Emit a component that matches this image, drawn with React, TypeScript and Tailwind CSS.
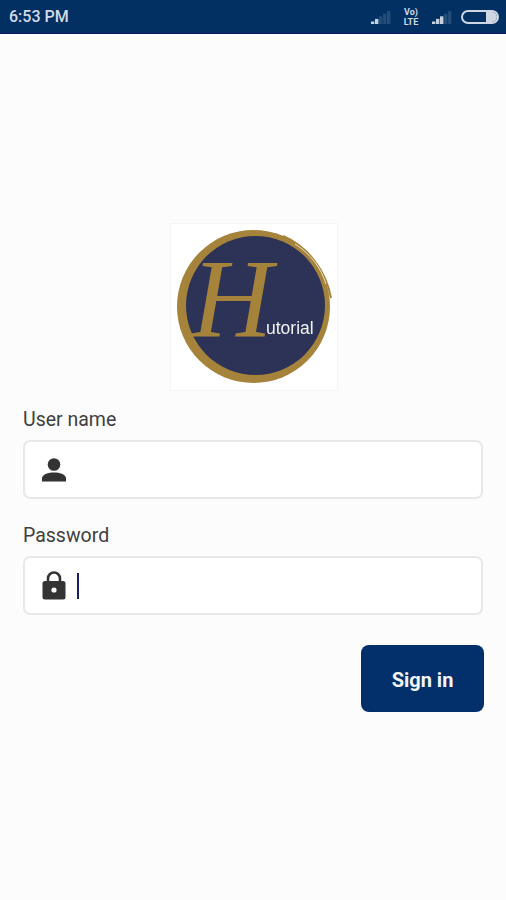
import React from 'react';

const Bars = ({ lit }: { lit: number }) => (
  <svg width="20" height="16" viewBox="0 0 20 16">
    {[0, 1, 2, 3, 4].map((i) => (
      <rect
        key={i}
        x={i * 4}
        y={12.5 - i * 2.6}
        width="3.4"
        height={2.5 + i * 2.6}
        fill="#dbe3ec"
        opacity={i < lit ? 0.9 : 0.16}
      />
    ))}
  </svg>
);

const StatusBar = () => (
  <div className="h-[34px] bg-[#023063] border-b border-[#12145c] flex items-center pl-[9px] pr-[7px] font-['Roboto',sans-serif]">
    <span className="text-[16px] font-medium text-[#d3dbe5] leading-none">6:53 PM</span>
    <div className="ml-auto flex items-center">
      <Bars lit={2} />
      <div className="ml-[11px] w-[18px] flex flex-col items-center text-[9px] font-bold leading-[10px] text-[#cfd8e3]">
        <span>Vo)</span>
        <span>LTE</span>
      </div>
      <div className="ml-[12px]">
        <Bars lit={3} />
      </div>
      <div className="ml-[9px] w-[38px] h-[14px] rounded-full border-2 border-[#cdd6e1] flex justify-end">
        <div className="w-[11px] h-full rounded-r-full bg-[#cdd6e1]" />
      </div>
    </div>
  </div>
);

const Logo = () => (
  <div className="w-[168px] h-[168px] bg-white border border-[#f5f5f5]">
    <svg width="166" height="166" viewBox="0 0 166 166" className="blur-[0.4px]">
      <circle cx="82.5" cy="82.5" r="76.5" fill="#a5833a" />
      <circle cx="84.5" cy="81.5" r="69.5" fill="#2c3357" />
      <path d="M112 12 C136 22 155 46 160 74" fill="none" stroke="#a5833a" strokeWidth="2" />
      <path d="M124 20 C140 30 150 44 155 60" fill="none" stroke="#e9e2d0" strokeWidth="1" />
      <text
        x="61"
        y="112"
        textAnchor="middle"
        fontSize="112"
        fontStyle="italic"
        fill="#a5833a"
        fontFamily="'Liberation Serif', serif"
      >
        H
      </text>
      <text x="95" y="110" fontSize="17.5" fill="#f2f2f2" fontFamily="'Liberation Sans', sans-serif">
        utorial
      </text>
    </svg>
  </div>
);

const Field = ({ label, icon, caret }: { label: string; icon: React.ReactNode; caret?: boolean }) => (
  <div>
    <div className="h-[24px] text-[19.5px] leading-[26px] text-[#404040]">{label}</div>
    <div className="mt-[9px] h-[59px] bg-white border-2 border-[#e8e8e8] rounded-[7px] flex items-center pl-[17px]">
      <div className="w-[24px] flex justify-center">{icon}</div>
      {caret && <div className="ml-[11px] w-[2px] h-[26px] bg-[#1b1d5e]" />}
    </div>
  </div>
);

const App: React.FC = () => {
  return (
    <div className="min-h-[900px] bg-[#fcfcfc] font-['Roboto',sans-serif]">
      <StatusBar />
      <div className="pt-[189px] px-[23px]">
        <div className="flex justify-center pl-[2px]">
          <Logo />
        </div>
        <div className="mt-[16px] flex flex-col gap-[24px]">
          <Field
            label="User name"
            icon={
              <svg width="24" height="24" viewBox="0 0 24 24" fill="#333333">
                <circle cx="12" cy="6.5" r="6.3" />
                <path d="M0 23.5 V20 C1 16 6 14.5 12 14.5 C18 14.5 23 16 24 20 V23.5 Z" />
              </svg>
            }
          />
          <Field
            label="Password"
            caret
            icon={
              <svg width="24" height="29" viewBox="0 0 24 29">
                <path
                  d="M6 11 V7.5 A6 6 0 0 1 18 7.5 V11"
                  fill="none"
                  stroke="#333333"
                  strokeWidth="2.6"
                />
                <rect x="0.5" y="10" width="23" height="18.5" rx="2.5" fill="#333333" />
                <circle cx="12" cy="19" r="2.6" fill="#fcfcfc" />
              </svg>
            }
          />
        </div>
        <div className="mt-[30px] flex justify-end -mr-[1px]">
          <button className="w-[123px] h-[67px] pt-[2px] rounded-[8px] bg-[#03306a] text-[#f2f4f8] text-[20px] font-bold">
            Sign in
          </button>
        </div>
      </div>
    </div>
  );
};

export default App;
